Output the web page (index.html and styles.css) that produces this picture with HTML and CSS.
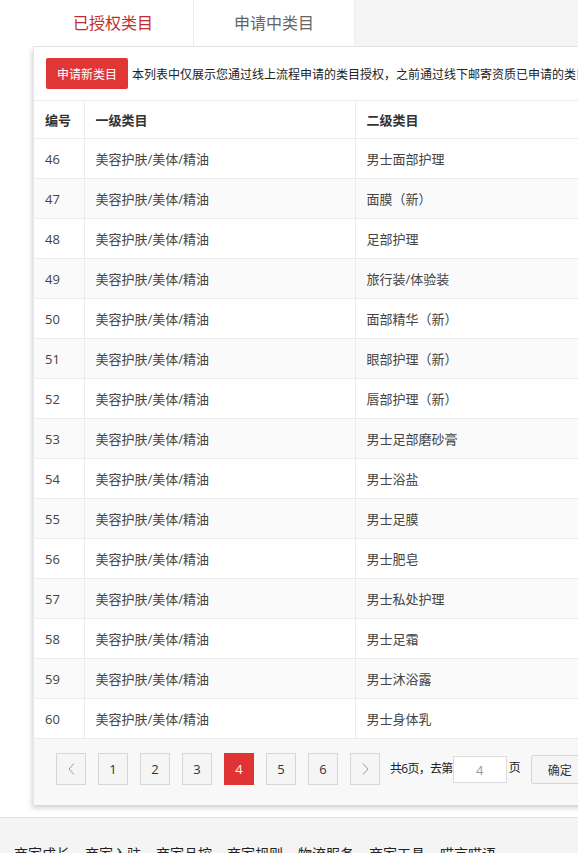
FILE: index.html
```html
<!DOCTYPE html>
<html lang="zh">
<head>
<meta charset="utf-8">
<link rel="stylesheet" href="styles.css">
</head>
<body>
<div class="page">
  <div class="tabs">
    <div class="tab active">已授权类目</div>
    <div class="tab">申请中类目</div>
  </div>
  <div class="card">
    <div class="toolbar">
      <button class="btn-red">申请新类目</button>
      <span class="desc">本列表中仅展示您通过线上流程申请的类目授权，之前通过线下邮寄资质已申请的类目授权请到资质管理中查看</span>
    </div>
    <table class="grid">
      <colgroup><col class="c1"><col class="c2"><col class="c3"></colgroup>
      <thead><tr><th>编号</th><th>一级类目</th><th>二级类目</th></tr></thead>
      <tbody>
        <tr><td>46</td><td>美容护肤/美体/精油</td><td>男士面部护理</td></tr>
        <tr><td>47</td><td>美容护肤/美体/精油</td><td>面膜（新）</td></tr>
        <tr><td>48</td><td>美容护肤/美体/精油</td><td>足部护理</td></tr>
        <tr><td>49</td><td>美容护肤/美体/精油</td><td>旅行装/体验装</td></tr>
        <tr><td>50</td><td>美容护肤/美体/精油</td><td>面部精华（新）</td></tr>
        <tr><td>51</td><td>美容护肤/美体/精油</td><td>眼部护理（新）</td></tr>
        <tr><td>52</td><td>美容护肤/美体/精油</td><td>唇部护理（新）</td></tr>
        <tr><td>53</td><td>美容护肤/美体/精油</td><td>男士足部磨砂膏</td></tr>
        <tr><td>54</td><td>美容护肤/美体/精油</td><td>男士浴盐</td></tr>
        <tr><td>55</td><td>美容护肤/美体/精油</td><td>男士足膜</td></tr>
        <tr><td>56</td><td>美容护肤/美体/精油</td><td>男士肥皂</td></tr>
        <tr><td>57</td><td>美容护肤/美体/精油</td><td>男士私处护理</td></tr>
        <tr><td>58</td><td>美容护肤/美体/精油</td><td>男士足霜</td></tr>
        <tr><td>59</td><td>美容护肤/美体/精油</td><td>男士沐浴露</td></tr>
        <tr><td>60</td><td>美容护肤/美体/精油</td><td>男士身体乳</td></tr>
      </tbody>
    </table>
    <div class="pager">
      <span class="pg"><svg width="7" height="12" viewBox="0 0 7 12"><path d="M6 0.5 L1 6 L6 11.5" fill="none" stroke="#999" stroke-width="1"/></svg></span>
      <span class="pg">1</span>
      <span class="pg">2</span>
      <span class="pg">3</span>
      <span class="pg current">4</span>
      <span class="pg">5</span>
      <span class="pg">6</span>
      <span class="pg next"><svg width="7" height="12" viewBox="0 0 7 12"><path d="M1 0.5 L6 6 L1 11.5" fill="none" stroke="#999" stroke-width="1"/></svg></span>
      <span class="total">共6页，去第</span>
      <span class="goto">4</span>
      <span class="unit">页</span>
      <span class="ok">确定</span>
    </div>
  </div>
  <div class="footer">
    <span>商家成长</span><span>商家入驻</span><span>商家品控</span><span>商家规则</span><span>物流服务</span><span>商家工具</span><span>喵言喵语</span>
  </div>
</div>
</body>
</html>
```

FILE: styles.css
```css
html, body {
  margin: 0;
  padding: 0;
  background: #fff;
  overflow: hidden;
}
body {
  font-family: "Open Sans", "Noto Sans CJK SC", sans-serif;
  color: #333;
}
.page {
  width: 578px;
  overflow: hidden;
}
.tabs {
  margin-left: 33px;
  width: 700px;
  height: 46px;
  display: flex;
  background: #f5f5f5;
  border-bottom: 1px solid #e8e8e8;
}
.tab {
  width: 161px;
  box-sizing: border-box;
  background: #fff;
  border-right: 1px solid #ececec;
  font-size: 16px;
  color: #666;
  display: flex;
  align-items: center;
  justify-content: center;
  line-height: 1;
}
.tab.active {
  color: #c42b2b;
}
.card {
  margin-left: 33px;
  width: 720px;
  background: #fff;
  border-left: 1px solid #e6e6e6;
  box-shadow: -1px 3px 5px rgba(0,0,0,0.18);
}
.toolbar {
  height: 53px;
  display: flex;
  align-items: center;
  padding-left: 12px;
  white-space: nowrap;
}
.btn-red {
  border: none;
  background: #e03636;
  color: #fff;
  font-family: "Noto Sans CJK SC", sans-serif;
  font-size: 12px;
  height: 31px;
  width: 82px;
  padding: 0;
  border-radius: 2px;
  margin-right: 4px;
}
.desc {
  font-size: 12px;
  color: #222;
}
.grid {
  border-collapse: collapse;
  table-layout: fixed;
  width: 720px;
  font-size: 13px;
}
.c1 { width: 50px; }
.c2 { width: 271px; }
.grid th, .grid td {
  border: 1px solid #ececec;
  border-left: none;
  text-align: left;
  padding: 0 0 0 11px;
  height: 39px;
  white-space: nowrap;
}
.grid th {
  font-weight: 600;
  color: #333;
  height: 37px;
}
.grid td {
  color: #444;
}
.grid tbody tr:nth-child(even) td {
  background: #fafafa;
}
.pager {
  background: #f8f8f8;
  height: 66px;
  box-sizing: border-box;
  padding: 14px 0 0 22px;
  display: flex;
  align-items: flex-start;
  font-size: 12px;
  white-space: nowrap;
}
.pg {
  width: 30px;
  height: 32px;
  box-sizing: border-box;
  border: 1px solid #d6d6d6;
  background: #f5f5f5;
  margin-right: 12px;
  display: flex;
  align-items: center;
  justify-content: center;
  font-size: 13px;
  color: #333;
}
.pg.current {
  background: #e03333;
  border-color: #e03333;
  color: #fff;
}
.pg.next {
  margin-right: 10px;
}
.total {
  line-height: 32px;
  color: #222;
  letter-spacing: -0.7px;
}
.goto {
  width: 54px;
  height: 27px;
  margin-top: 3px;
  box-sizing: border-box;
  border: 1px solid #ddd;
  background: #fff;
  color: #999;
  font-size: 13px;
  display: flex;
  align-items: center;
  justify-content: center;
}
.unit {
  line-height: 29px;
  margin-left: 2px;
  color: #222;
  font-size: 12px;
}
.ok {
  margin-left: 10px;
  margin-top: 2px;
  width: 56px;
  height: 29px;
  box-sizing: border-box;
  border: 1px solid #d6d6d6;
  border-radius: 2px;
  background: #f5f5f5;
  display: flex;
  align-items: center;
  padding-left: 16px;
  color: #333;
}
.footer {
  margin-top: 12px;
  background: #f4f4f4;
  border-top: 1px solid #e3e3e3;
  height: 60px;
  padding: 25px 0 0 14px;
  font-size: 14px;
  color: #222;
  white-space: nowrap;
  font-family: "Noto Sans CJK SC", sans-serif;
}
.footer span {
  margin-right: 15px;
}
```
